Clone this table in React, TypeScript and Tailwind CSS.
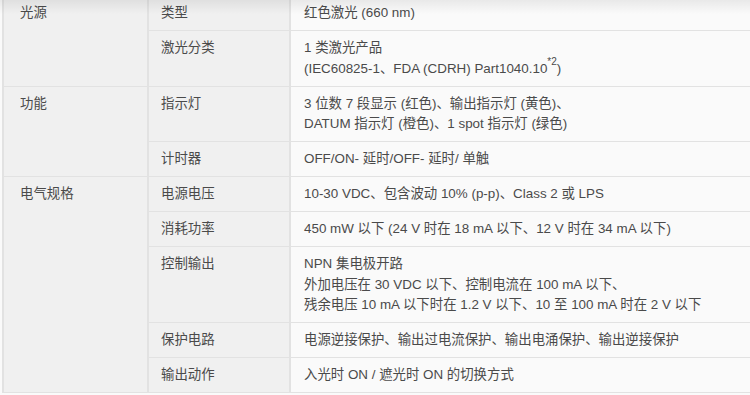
import React from 'react';

interface SpecRow {
  label: string;
  lines: React.ReactNode[];
}

interface SpecGroup {
  title: string;
  rows: SpecRow[];
}

const groups: SpecGroup[] = [
  {
    title: '光源',
    rows: [
      { label: '类型', lines: ['红色激光 (660 nm)'] },
      {
        label: '激光分类',
        lines: [
          '1 类激光产品',
          <>
            (IEC60825-1、FDA (CDRH) Part1040.10<sup className="text-[10px] align-[3px]">*2</sup>)
          </>,
        ],
      },
    ],
  },
  {
    title: '功能',
    rows: [
      {
        label: '指示灯',
        lines: ['3 位数 7 段显示 (红色)、输出指示灯 (黄色)、', 'DATUM 指示灯 (橙色)、1 spot 指示灯 (绿色)'],
      },
      { label: '计时器', lines: ['OFF/ON- 延时/OFF- 延时/ 单触'] },
    ],
  },
  {
    title: '电气规格',
    rows: [
      { label: '电源电压', lines: ['10-30 VDC、包含波动 10% (p-p)、Class 2 或 LPS'] },
      { label: '消耗功率', lines: ['450 mW 以下 (24 V 时在 18 mA 以下、12 V 时在 34 mA 以下)'] },
      {
        label: '控制输出',
        lines: [
          'NPN 集电极开路',
          '外加电压在 30 VDC 以下、控制电流在 100 mA 以下、',
          '残余电压 10 mA 以下时在 1.2 V 以下、10 至 100 mA 时在 2 V 以下',
        ],
      },
      { label: '保护电路', lines: ['电源逆接保护、输出过电流保护、输出电涌保护、输出逆接保护'] },
      { label: '输出动作', lines: ['入光时 ON / 遮光时 ON 的切换方式'] },
    ],
  },
];

export default function App() {
  return (
    <div
      className="relative w-[750px] h-[395px] overflow-hidden bg-[#fafafa] text-[13.4px] leading-[20.5px] text-[#4a4a4a]"
      style={{ fontFamily: '"Liberation Sans", Arial, "Noto Sans CJK SC", sans-serif' }}
    >
      <table className="ml-[2px] mt-[-4px] w-[748px] border-collapse table-fixed">
        <colgroup>
          <col className="w-[145px]" />
          <col className="w-[142px]" />
          <col />
        </colgroup>
        <tbody>
          {groups.map((group) =>
            group.rows.map((row, i) => (
              <tr key={group.title + row.label}>
                {i === 0 && (
                  <td
                    rowSpan={group.rows.length}
                    className="align-top bg-[#f0f0f0] border-l-2 border-r-2 border-b border-[#e2e2e2] pl-[16px] pr-2 pt-[7px] pb-[6.5px]"
                  >
                    {group.title}
                  </td>
                )}
                <td className="align-top bg-[#f0f0f0] border-r-2 border-b border-[#e2e2e2] pl-[12px] pr-2 pt-[7px] pb-[6.5px]">
                  {row.label}
                </td>
                <td className="align-top bg-[#fafafa] border-b border-[#e2e2e2] pl-[13px] pr-2 pt-[7px] pb-[6.5px]">
                  {row.lines.map((line, j) => (
                    <div key={j} className="whitespace-nowrap">
                      {line}
                    </div>
                  ))}
                </td>
              </tr>
            ))
          )}
        </tbody>
      </table>
      <div className="pointer-events-none absolute left-0 top-0 h-[14px] w-full bg-gradient-to-b from-black/[0.07] to-transparent" />
    </div>
  );
}
